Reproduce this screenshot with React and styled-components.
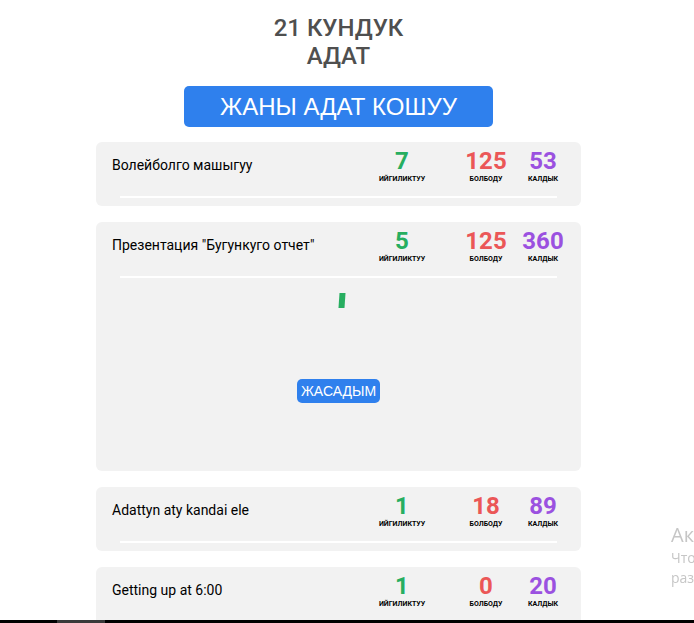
import React, { useState } from 'react';
import styled, { createGlobalStyle } from 'styled-components';

const GlobalStyle = createGlobalStyle`
  html, body {
    margin: 0;
    padding: 0;
    background: #ffffff;
    overflow: hidden;
  }

  body {
    font-family: Roboto, "Noto Sans", sans-serif;
  }
`;

const Page = styled.div`
  width: 677px;
  display: flex;
  flex-direction: column;
  align-items: center;
  padding-top: 14px;
`;

const Title = styled.h1`
  width: 160px;
  margin: 0;
  font-size: 24px;
  line-height: 28px;
  font-weight: 500;
  color: #4f4f4f;
  text-align: center;
`;

const AddButton = styled.button`
  width: 309px;
  height: 41px;
  margin: 16px 0 15px;
  padding: 0;
  border: none;
  border-radius: 5px;
  background: #2f80ed;
  color: #ffffff;
  font-family: "Liberation Sans", Arial, sans-serif;
  font-size: 24px;
  cursor: pointer;
`;

const Card = styled.div`
  width: 485px;
  box-sizing: border-box;
  padding: 5px 0 8px;
  margin-bottom: 16px;
  background: #f2f2f2;
  border-radius: 6px;
`;

const CardHeader = styled.div`
  display: flex;
  align-items: center;
  padding: 0 17px 0 16px;
`;

const HabitName = styled.div`
  flex: 1;
  font-size: 14px;
  color: #000000;
`;

const Stats = styled.div`
  display: flex;
  align-items: flex-start;
  gap: 14px;
`;

const Stat = styled.div`
  width: ${(p) => p.$width}px;
  display: flex;
  flex-direction: column;
  align-items: center;

  &:first-child {
    margin-right: 18px;
  }
`;

const StatValue = styled.div`
  font-size: 24px;
  line-height: 28px;
  font-weight: 700;
  color: ${(p) => p.$color};
`;

const StatLabel = styled.div`
  font-size: 7px;
  line-height: 8px;
  font-weight: 700;
  color: #000000;
  text-transform: uppercase;
  white-space: nowrap;
`;

const Divider = styled.div`
  height: 2px;
  margin: 13px 24px 0;
  background: #ffffff;
`;

const CardBody = styled.div`
  height: 185px;
  box-sizing: border-box;
  padding-top: 15px;
  display: flex;
  flex-direction: column;
  align-items: center;
`;

const ProgressMark = styled.div`
  width: 6px;
  height: 15px;
  margin-left: 6px;
  background: #27ae60;
  transform: skewX(-4deg);
`;

const DoneButton = styled.button`
  height: 24px;
  margin-top: 71px;
  padding: 0 4px;
  border: none;
  border-radius: 5px;
  background: #2f80ed;
  color: #ffffff;
  font-family: "Liberation Sans", Arial, sans-serif;
  font-size: 14px;
  cursor: pointer;
`;

const Taskbar = styled.div`
  position: fixed;
  left: 0;
  right: 0;
  bottom: 0;
  height: 3px;
  display: flex;
  background: #000000;
`;

const TaskbarItem = styled.div`
  width: 48px;
  margin-left: 57px;
  background: #3a3a3a;
`;

const Watermark = styled.div`
  position: fixed;
  left: 671px;
  top: 522px;
  white-space: nowrap;
  font-family: "Open Sans", "Noto Sans", sans-serif;
  color: #c6c6c6;
`;

const WatermarkTitle = styled.div`
  font-size: 20px;
  line-height: 26px;
`;

const WatermarkText = styled.div`
  font-size: 14px;
  line-height: 20px;
`;

const habits = [
  { id: 1, name: 'Волейболго машыгуу', done: 7, missed: 125, left: 53 },
  { id: 2, name: 'Презентация "Бугункуго отчет"', done: 5, missed: 125, left: 360 },
  { id: 3, name: 'Adattyn aty kandai ele', done: 1, missed: 18, left: 89 },
  { id: 4, name: 'Getting up at 6:00', done: 1, missed: 0, left: 20 },
];

const HabitCard = ({ habit, open }) => (
  <Card>
    <CardHeader>
      <HabitName>{habit.name}</HabitName>
      <Stats>
        <Stat $width={60}>
          <StatValue $color="#27ae60">{habit.done}</StatValue>
          <StatLabel>Ийгиликтуу</StatLabel>
        </Stat>
        <Stat $width={44}>
          <StatValue $color="#eb5757">{habit.missed}</StatValue>
          <StatLabel>Болбоду</StatLabel>
        </Stat>
        <Stat $width={42}>
          <StatValue $color="#9b51e0">{habit.left}</StatValue>
          <StatLabel>Калдык</StatLabel>
        </Stat>
      </Stats>
    </CardHeader>
    <Divider />
    {open && (
      <CardBody>
        <ProgressMark />
        <DoneButton type="button">ЖАСАДЫМ</DoneButton>
      </CardBody>
    )}
  </Card>
);

const App = () => {
  const [openId] = useState(2);

  return (
    <>
      <GlobalStyle />
      <Page>
        <Title>21 КУНДУК АДАТ</Title>
        <AddButton type="button">ЖАНЫ АДАТ КОШУУ</AddButton>
        {habits.map((habit) => (
          <HabitCard key={habit.id} habit={habit} open={habit.id === openId} />
        ))}
      </Page>
      <Watermark>
        <WatermarkTitle>Активация Windows</WatermarkTitle>
        <WatermarkText>Чтобы активировать Windows, перейдите в</WatermarkText>
        <WatermarkText>раздел "Параметры".</WatermarkText>
      </Watermark>
      <Taskbar>
        <TaskbarItem />
      </Taskbar>
    </>
  );
};

export default App;
